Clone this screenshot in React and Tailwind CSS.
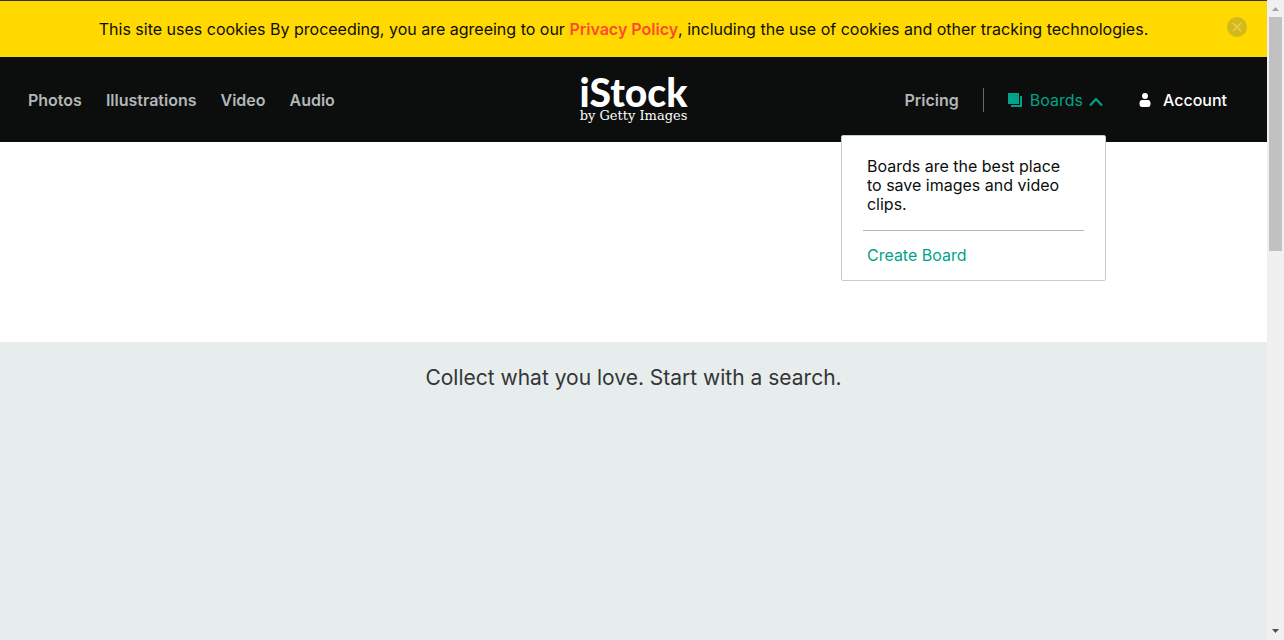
import React from "react";

const links = ["Photos", "Illustrations", "Video", "Audio"];

function CookieBanner() {
  return (
    <div className="flex h-[57px] items-center border-t border-[#333] bg-[#ffd900] px-5 text-[#0c0e0d]">
      <p className="flex-1 text-center text-[16px] leading-5">
        This site uses cookies By proceeding, you are agreeing to our{" "}
        <a href="#privacy" className="font-semibold text-[#ff4a2e]">Privacy Policy</a>, including the use of
        cookies and other tracking technologies.
      </p>
      <button aria-label="Close" className="mb-1 flex size-5 items-center justify-center rounded-full bg-[#d4b91b]">
        <svg viewBox="0 0 10 10" className="size-[10px]" fill="none" stroke="#ead45a" strokeWidth="1.2">
          <path d="M1 1l8 8M9 1L1 9" />
        </svg>
      </button>
    </div>
  );
}

function Logo() {
  return (
    <a href="#home" aria-label="iStock by Getty Images" className="flex flex-col items-center whitespace-nowrap text-white">
      <span className="font-['Lato',sans-serif] text-[39px] leading-8 font-black">iStock</span>
      <span className="font-['DejaVu_Serif',serif] text-[13px] leading-4">by Getty Images</span>
    </a>
  );
}

function BoardsMenu() {
  return (
    <div className="relative">
      <button aria-expanded="true" className="flex items-center text-[#00a388]">
        <svg viewBox="0 0 14 14" className="mr-2 size-[14px]" fill="currentColor">
          <path d="M0 0h11v11H0zM12 3h2v11H3v-2h9z" />
        </svg>
        Boards
        <svg viewBox="0 0 14 10" className="mt-1 ml-1.5 h-[10px] w-[14px]" fill="none" stroke="currentColor" strokeWidth="2.2">
          <path d="M1 8.500l6-6.500 6 6.500" />
        </svg>
      </button>
      <div className="absolute top-[47px] -right-[3px] z-10 w-[265px] rounded-xs border border-[#c3cfce] bg-white px-[21px] pt-[21px] pb-[15px] text-[#0c0e0d]">
        <p className="pr-4 pb-4 pl-1 text-[16px] leading-[19px]">
          Boards are the best place to save images and video clips.
        </p>
        <div className="border-t border-[#a9bbbb] px-1 pt-[15px]">
          <a href="#create" className="block leading-[19px] text-[#00a388]">Create Board</a>
        </div>
      </div>
    </div>
  );
}

function Header() {
  return (
    <header className="grid h-[85px] grid-cols-[1fr_auto_1fr] items-center bg-[#0c0e0d] px-7 text-[16px] leading-6">
      <nav className="flex gap-6 font-semibold text-[#b3b7b7]">
        {links.map((l) => (
          <a key={l} href={"#" + l}>{l}</a>
        ))}
      </nav>
      <Logo />
      <div className="flex items-center justify-end pr-3">
        <a href="#pricing" className="font-semibold text-[#b3b7b7]">Pricing</a>
        <span className="mx-6 h-6 w-px bg-[#666a69]" />
        <BoardsMenu />
        <a href="#account" className="ml-9 flex items-center gap-3 font-medium text-white">
          <svg viewBox="0 0 12 14" className="h-[14px] w-3" fill="currentColor">
            <circle cx="6" cy="3" r="3" />
            <path d="M3 7h6c1.700 0 2.500 1.500 2.500 3.500S11 14 9 14H3C1 14 .5 12.500 .5 10.500S1.300 7 3 7z" />
          </svg>
          Account
        </a>
      </div>
    </header>
  );
}

function Scrollbar() {
  return (
    <div aria-hidden="true" className="flex w-[17px] shrink-0 flex-col items-center bg-[#f0f0f0]">
      <svg viewBox="0 0 17 17" className="size-[17px]" fill="#a3a3a3"><path d="M5 11h7L8.500 7z" /></svg>
      <div className="h-[234px] w-[13px] bg-[#c1c1c1]" />
      <svg viewBox="0 0 17 17" className="mt-auto size-[17px]" fill="#505050"><path d="M5 6h7l-3.500 4z" /></svg>
    </div>
  );
}

export default function App() {
  return (
    <div className="flex min-h-screen bg-white font-['Inter','Liberation_Sans',sans-serif]">
      <div className="flex min-w-0 flex-1 flex-col">
        <CookieBanner />
        <Header />
        <main className="flex flex-1 flex-col pt-[200px]">
          <section className="flex-1 bg-[#e7edec] pt-[21px]">
            <h1 className="text-center text-[21px] leading-[30px] text-[#333637]">
              Collect what you love. Start with a search.
            </h1>
          </section>
        </main>
      </div>
      <Scrollbar />
    </div>
  );
}
